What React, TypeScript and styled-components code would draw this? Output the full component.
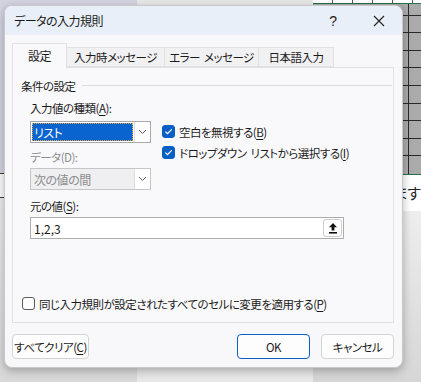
import React from 'react'
import styled, { createGlobalStyle } from 'styled-components'

const GlobalStyle = createGlobalStyle`
  html, body {
    margin: 0;
    padding: 0;
  }
  body {
    width: 421px;
    height: 382px;
    overflow: hidden;
    font-family: "Noto Sans CJK JP", "Noto Sans", sans-serif;
    font-feature-settings: "palt";
    color: #1b1b1b;
  }
`

// ---- spreadsheet behind the dialog ----
const Backdrop = styled.div`
  position: relative;
  width: 421px;
  height: 382px;
  display: flex;
  overflow: hidden;
  background: #e4e4e4;
`

const LeftPane = styled.div`
  width: 140px;
  display: flex;
  flex-direction: column;
`

const Lavender = styled.div`
  height: 173px;
  background: #d3d4e0;
`

const WhiteRow = styled.div`
  height: 23px;
  background: #fbfbfb;
  border-top: 1px solid #3a3a3a;
  border-bottom: 1px solid #3a3a3a;
`

const GreyFill = styled.div`
  flex: 1;
  background: linear-gradient(#ececec, #d9d9d9);
`

const MidPane = styled.div`
  width: 180px;
  background: #e8e8e8;
`

const RightPane = styled.div`
  flex: 1;
  display: flex;
  flex-direction: column;
`

const TopCells = styled.div`
  height: 3px;
  background: repeating-linear-gradient(90deg, #fff 0 19px, #555 19px 20px);
`

const GreenRule = styled.div`
  height: 1px;
  background: #217346;
`

const SelectedCells = styled.div`
  height: 170px;
  background-color: #ababab;
  background-image:
    linear-gradient(90deg, transparent 95px, #2a2a2a 95px 96px, transparent 96px),
    repeating-linear-gradient(180deg, transparent 0 16.6px, #2a2a2a 16.6px 17.6px);
  background-position: 0 0, 0 -6px;
`

const TextRow = styled.div`
  height: 36px;
  background: #fff;
  padding-left: 81px;
  font-size: 15px;
  line-height: 36px;
  color: #222;
  white-space: nowrap;
`

const Shade = styled.div`
  flex: 1;
  background: linear-gradient(#eeeeee, #d6d6d6);
`

// ---- dialog ----
const Dialog = styled.div`
  position: absolute;
  left: 4px;
  top: 5px;
  width: 399px;
  height: 363px;
  box-sizing: border-box;
  background: #f8f8fa;
  border: 1px solid #c9c9cc;
  border-radius: 8px;
  box-shadow: 0 3px 10px rgba(0, 0, 0, 0.28);
  overflow: hidden;
  display: flex;
  flex-direction: column;
  font-size: 11.5px;
  letter-spacing: -0.5px;
`

const TitleBar = styled.div`
  height: 29px;
  flex: none;
  display: flex;
  align-items: center;
  background: #e9eff8;
  padding-left: 9px;
`

const Title = styled.div`
  flex: 1;
  font-size: 12px;
  color: #1a1a1a;
`

const CaptionButton = styled.div`
  width: 46px;
  height: 29px;
  display: flex;
  align-items: center;
  justify-content: center;
  font-family: "Liberation Sans", sans-serif;
  font-size: 14px;
  color: #222;
`

const Body = styled.div`
  flex: 1;
  display: flex;
  flex-direction: column;
  padding: 8px 8px 9px 7px;
`

const TabList = styled.div`
  height: 24px;
  display: flex;
  align-items: flex-end;
  position: relative;
  z-index: 1;
`

const Tab = styled.div<{ $w: number; $active?: boolean }>`
  width: ${p => p.$w}px;
  height: ${p => (p.$active ? 25 : 20)}px;
  box-sizing: border-box;
  display: flex;
  align-items: center;
  justify-content: center;
  white-space: nowrap;
  font-size: ${p => (p.$active ? 12 : 11.5)}px;
  background: ${p => (p.$active ? '#f9f9fb' : '#f1f1f4')};
  border: 1px solid #e1e1e4;
  border-bottom: ${p => (p.$active ? 'none' : '1px solid #e1e1e4')};
  margin-right: -1px;
  margin-bottom: ${p => (p.$active ? -1 : 0)}px;
  padding-bottom: ${p => (p.$active ? 1 : 0)}px;
`

const Sp = styled.span`
  display: inline-block;
  width: 4px;
`

const Panel = styled.div`
  height: 256px;
  box-sizing: border-box;
  background: #f9f9fb;
  border: 1px solid #e1e1e4;
  padding: 10px 0 0 8px;
  display: flex;
  flex-direction: column;
`

const GroupHeader = styled.div`
  height: 16px;
  display: flex;
  align-items: center;
  padding-right: 1px;
`

const GroupLine = styled.div`
  flex: 1;
  height: 1px;
  background: #dcdcdf;
  margin-left: 6px;
  margin-top: -2px;
`

const Indent = styled.div`
  padding-left: 9px;
  display: flex;
  flex-direction: column;
`

const Label = styled.div<{ $disabled?: boolean; $top: number }>`
  height: 16px;
  line-height: 16px;
  margin-top: ${p => p.$top}px;
  color: ${p => (p.$disabled ? '#8d8d90' : '#1b1b1b')};
  white-space: nowrap;
`

const Mn = styled.span`
  text-decoration: underline;
  text-underline-offset: 2px;
`

const FieldRow = styled.div`
  display: flex;
  align-items: flex-start;
  margin-top: 5px;
`

const LeftCol = styled.div`
  width: 121px;
  display: flex;
  flex-direction: column;
`

const RightCol = styled.div`
  margin-left: 11px;
  display: flex;
  flex-direction: column;
`

const Combo = styled.div<{ $disabled?: boolean }>`
  height: 22px;
  box-sizing: border-box;
  display: flex;
  border: 1px solid ${p => (p.$disabled ? '#c6c6c8' : '#a9a9ac')};
  background: ${p => (p.$disabled ? '#efeff1' : '#fff')};
`

const ComboValue = styled.div<{ $selected?: boolean; $disabled?: boolean }>`
  flex: 1;
  margin: 1px;
  padding-left: 2px;
  display: flex;
  align-items: center;
  font-size: 12px;
  color: ${p => (p.$selected ? '#fff' : p.$disabled ? '#8d8d90' : '#1b1b1b')};
  background: ${p => (p.$selected ? '#0a64d0' : 'transparent')};
  outline: ${p => (p.$selected ? '1px dotted #e8b040' : 'none')};
  outline-offset: -1px;
`

const ComboButton = styled.div`
  width: 15px;
  display: flex;
  align-items: center;
  justify-content: center;
  background: #fff;
  border-left: 1px solid #dedee0;
`

const CheckRow = styled.div`
  height: 21px;
  display: flex;
  align-items: center;
  white-space: nowrap;
`

const Box = styled.div<{ $checked?: boolean }>`
  width: 13px;
  height: 13px;
  flex: none;
  box-sizing: border-box;
  border-radius: 3px;
  margin-right: 4px;
  display: flex;
  align-items: center;
  justify-content: center;
  background: ${p => (p.$checked ? '#0a5fc4' : '#fdfdfd')};
  border: 1px solid ${p => (p.$checked ? '#0a5fc4' : '#5a5a5c')};
`

const Dropdown = styled(Combo)`
  margin-top: 3px;
`

const SourceBox = styled.div`
  width: 314px;
  height: 22px;
  box-sizing: border-box;
  margin-top: 3px;
  display: flex;
  align-items: center;
  border: 1px solid #adadb0;
  background: #fff;
  padding-left: 3px;
  font-size: 12px;
  letter-spacing: 0;
`

const SourceText = styled.div`
  flex: 1;
`

const RefButton = styled.div`
  width: 19px;
  height: 18px;
  box-sizing: border-box;
  margin-right: 1px;
  border: 1px solid #cfcfd2;
  border-radius: 3px;
  display: flex;
  align-items: center;
  justify-content: center;
`

const Spacer = styled.div`
  flex: 1;
`

const BottomCheck = styled(CheckRow)`
  padding-left: 1px;
  margin-bottom: 8px;
`

const ButtonRow = styled.div`
  display: flex;
  gap: 11px;
  margin-top: 11px;
`

const Button = styled.div<{ $w: number; $primary?: boolean }>`
  width: ${p => p.$w}px;
  height: 25px;
  box-sizing: border-box;
  display: flex;
  align-items: center;
  justify-content: center;
  white-space: nowrap;
  background: #fdfdfd;
  border: 1px solid ${p => (p.$primary ? '#0a5fc4' : '#d3d3d6')};
  border-radius: 4px;
`

const Chevron = () => (
  <svg width="9" height="6" viewBox="0 0 9 6">
    <path d="M1 1l3.5 3.5L8 1" fill="none" stroke="#5c5c5e" strokeWidth="1" />
  </svg>
)

const Check = () => (
  <svg width="11" height="11" viewBox="0 0 11 11">
    <path d="M2.4 5.6l2.1 2.1 4.2-4.3" fill="none" stroke="#fff" strokeWidth="1.3" />
  </svg>
)

const UpArrow = () => (
  <svg width="10" height="12" viewBox="0 0 10 12">
    <path d="M5 1L1 5.2h2.6V8.6h2.8V5.2H9z" fill="#111" />
    <rect x="1" y="10" width="8" height="1.6" fill="#111" />
  </svg>
)

const App = () => {
  return (
    <>
      <GlobalStyle />
      <Backdrop>
        <LeftPane>
          <Lavender />
          <WhiteRow />
          <GreyFill />
        </LeftPane>
        <MidPane />
        <RightPane>
          <TopCells />
          <GreenRule />
          <SelectedCells />
          <GreenRule />
          <TextRow>ます</TextRow>
          <Shade />
        </RightPane>

        <Dialog>
          <TitleBar>
            <Title>データの入力規則</Title>
            <CaptionButton>?</CaptionButton>
            <CaptionButton>
              <svg width="12" height="12" viewBox="0 0 12 12">
                <path d="M1 1l10 10M11 1L1 11" stroke="#222" strokeWidth="1.1" />
              </svg>
            </CaptionButton>
          </TitleBar>
          <Body>
            <TabList>
              <Tab $w={55} $active>設定</Tab>
              <Tab $w={99}>入力時メッセージ</Tab>
              <Tab $w={95}>
                エラー<Sp />メッセージ
              </Tab>
              <Tab $w={76}>日本語入力</Tab>
            </TabList>
            <Panel>
              <GroupHeader>
                条件の設定
                <GroupLine />
              </GroupHeader>
              <Indent>
                <Label $top={6}>
                  入力値の種類(<Mn>A</Mn>):
                </Label>
                <FieldRow>
                  <LeftCol>
                    <Combo>
                      <ComboValue $selected>リスト</ComboValue>
                      <ComboButton>
                        <Chevron />
                      </ComboButton>
                    </Combo>
                    <Label $top={6} $disabled>
                      データ(D):
                    </Label>
                    <Dropdown $disabled>
                      <ComboValue $disabled>次の値の間</ComboValue>
                      <ComboButton>
                        <Chevron />
                      </ComboButton>
                    </Dropdown>
                  </LeftCol>
                  <RightCol>
                    <CheckRow>
                      <Box $checked>
                        <Check />
                      </Box>
                      空白を無視する(<Mn>B</Mn>)
                    </CheckRow>
                    <CheckRow>
                      <Box $checked>
                        <Check />
                      </Box>
                      ドロップダウン<Sp />リストから選択する(<Mn>I</Mn>)
                    </CheckRow>
                  </RightCol>
                </FieldRow>
                <Label $top={8}>
                  元の値(<Mn>S</Mn>):
                </Label>
                <SourceBox>
                  <SourceText>1,2,3</SourceText>
                  <RefButton>
                    <UpArrow />
                  </RefButton>
                </SourceBox>
              </Indent>
              <Spacer />
              <BottomCheck>
                <Box />
                同じ入力規則が設定されたすべてのセルに変更を適用する(<Mn>P</Mn>)
              </BottomCheck>
            </Panel>
            <ButtonRow>
              <Button $w={77}>
                すべてクリア(<Mn>C</Mn>)
              </Button>
              <Spacer />
              <Button $w={73} $primary>
                OK
              </Button>
              <Button $w={73}>キャンセル</Button>
            </ButtonRow>
          </Body>
        </Dialog>
      </Backdrop>
    </>
  )
}

export default App
